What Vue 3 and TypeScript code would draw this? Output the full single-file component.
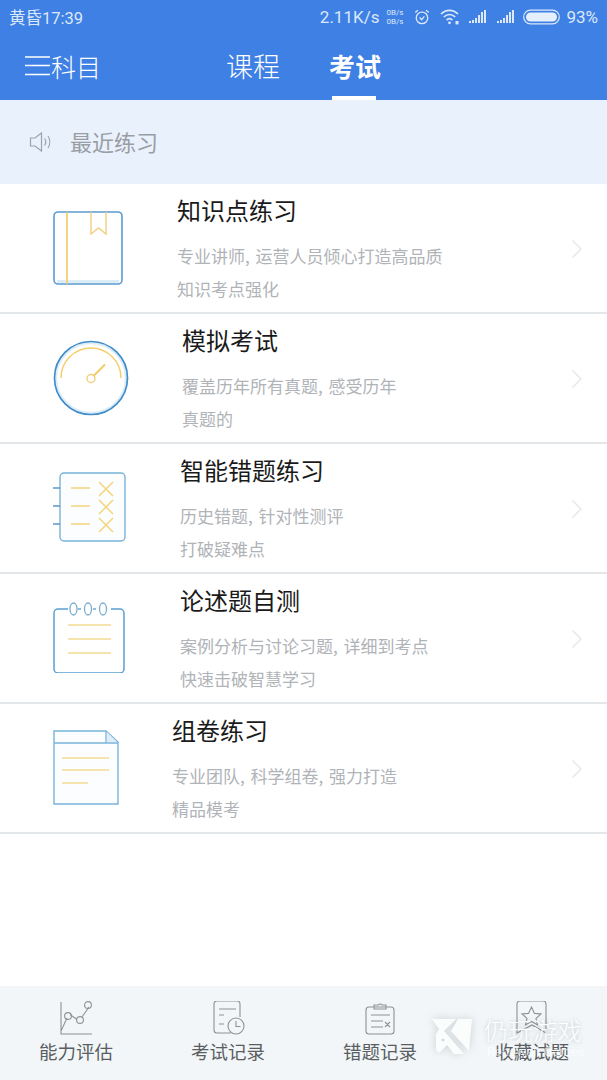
<script setup lang="ts">
import { ref } from 'vue'

interface Row {
  key: string
  title: string
  lines: string[]
}

const rows: Row[] = [
  { key: 'book', title: '知识点练习', lines: ['专业讲师, 运营人员倾心打造高品质', '知识考点强化'] },
  { key: 'gauge', title: '模拟考试', lines: ['覆盖历年所有真题, 感受历年', '真题的'] },
  { key: 'wrong', title: '智能错题练习', lines: ['历史错题, 针对性测评', '打破疑难点'] },
  { key: 'note', title: '论述题自测', lines: ['案例分析与讨论习题, 详细到考点', '快速击破智慧学习'] },
  { key: 'paper', title: '组卷练习', lines: ['专业团队, 科学组卷, 强力打造', '精品模考'] },
]

const tabs = ['能力评估', '考试记录', '错题记录', '收藏试题']
const active = ref('考试')
</script>

<template>
  <div class="page">
    <header class="top">
      <div class="status">
        <span class="clock">黄昏17:39</span>
        <div class="status_right">
          <span class="speed">2.11K/s</span>
          <span class="net"><i>0B/s</i><i>0B/s</i></span>
          <svg class="alarm" width="18" height="20" viewBox="0 0 20 20" fill="none" stroke="#dce8fa" stroke-width="1.5">
            <circle cx="10" cy="11" r="6.4" />
            <path d="M7.4 10.5l2.2 2.4 3-3.6M2.5 5l3-2.4M17.5 5l-3-2.4" />
          </svg>
          <svg class="wifi" width="20" height="18" viewBox="0 0 20 18" fill="none" stroke="#dce8fa" stroke-width="1.7">
            <path d="M1 6c5-4.8 12-4.8 17 0M3.8 9c3.4-3.2 8-3.2 11.4 0M6.600 12c1.800-1.600 4-1.600 5.800 0" />
            <circle cx="9.500" cy="14.800" r="1.400" fill="#dce8fa" stroke="none" />
            <rect x="15.500" y="13" width="3" height="3.400" fill="#dce8fa" stroke="none" />
          </svg>
          <svg class="bars" width="20" height="14" viewBox="0 0 18 14" fill="#dce8fa">
            <rect x="0" y="11" width="2" height="2" /><rect x="3" y="10" width="2" height="3" />
            <rect x="6" y="8" width="2" height="5" /><rect x="9" y="5" width="2" height="8" />
            <rect x="12" y="2" width="2" height="11" /><rect x="15" y="0" width="2" height="13" />
          </svg>
          <svg class="bars" width="20" height="14" viewBox="0 0 18 14" fill="#dce8fa">
            <rect x="0" y="11" width="2" height="2" /><rect x="3" y="10" width="2" height="3" />
            <rect x="6" y="8" width="2" height="5" /><rect x="9" y="5" width="2" height="8" />
            <rect x="12" y="2" width="2" height="11" /><rect x="15" y="0" width="2" height="13" />
          </svg>
          <svg class="battery" width="37" height="16" viewBox="0 0 37 16">
            <rect x="0.700" y="1.200" width="35.600" height="13.600" rx="6.800" fill="none" stroke="#dce8fa" stroke-width="1.200" />
            <rect x="3" y="3.400" width="31" height="9.200" rx="4.600" fill="#e6effc" />
          </svg>
          <span class="pct">93%</span>
        </div>
      </div>
      <nav class="nav">
        <div class="subject">
          <svg width="25" height="21" viewBox="0 0 25 21" stroke="#fff" stroke-width="1.400">
            <path d="M0 2h25M0 10.500h25M0 19.500h25" />
          </svg>
          <span>科目</span>
        </div>
        <div class="nav_tabs">
          <span class="nav_tab">课程</span>
          <span class="nav_tab on">{{ active }}</span>
        </div>
      </nav>
    </header>

    <div class="recent">
      <svg width="24" height="24" viewBox="0 0 24 24" fill="none" stroke="#9aa3ad" stroke-width="1.200">
        <path d="M1.500 8h4.500l6.500-5v18l-6.500-5H1.500zM15.500 8.500c1.500 2 1.500 5 0 7M19 6c2.300 3.500 2.300 8.500 0 12" />
      </svg>
      <span>最近练习</span>
    </div>

    <ul class="list">
      <li v-for="row in rows" :key="row.key" class="row" :class="'row_' + row.key">
        <div class="icon">
          <svg v-if="row.key === 'book'" width="72" height="78" viewBox="0 0 72 78" fill="none">
            <rect x="1" y="5" width="68" height="72" rx="4" fill="#fff" stroke="#5b9bd0" stroke-width="1.600" />
            <path d="M4 74.500h62" stroke="#dcedf8" stroke-width="3" />
            <path d="M14 5v72" stroke="#f4ca63" stroke-width="1.600" />
            <path d="M38 5v22l7.500-6 7.500 6V5" stroke="#f0d080" stroke-width="1.400" />
          </svg>
          <svg v-else-if="row.key === 'gauge'" width="78" height="78" viewBox="0 0 78 78" fill="none">
            <circle cx="38" cy="38" r="34.800" fill="#fff" stroke="#dcedf8" stroke-width="2" />
            <circle cx="38" cy="38" r="36.500" stroke="#3f8ccb" stroke-width="1.700" />
            <path d="M8 38a30 30 0 0 1 60 0" stroke="#f4cf6c" stroke-width="1.500" />
            <circle cx="38" cy="38.500" r="4" fill="#fff" stroke="#f0cf72" stroke-width="1.300" />
            <path d="M41 35.500l11-11" stroke="#f0c95f" stroke-width="1.800" />
          </svg>
          <svg v-else-if="row.key === 'wrong'" width="74" height="72" viewBox="0 0 74 72" fill="none">
            <rect x="7" y="1" width="65" height="68" rx="4" fill="#fbfdff" stroke="#78b2d8" stroke-width="1.400" />
            <path d="M0 16h7M0 34h7M0 52h7" stroke="#5e97c4" stroke-width="1.400" />
            <path d="M18 16h19M18 34h19M18 52h19" stroke="#f4d480" stroke-width="1.500" />
            <path d="M46 10l14 14M60 10L46 24M46 28l14 14M60 28L46 42M46 46l14 14M60 46L46 60" stroke="#f3d67c" stroke-width="1.500" />
          </svg>
          <svg v-else-if="row.key === 'note'" width="74" height="72" viewBox="0 0 74 72" fill="none">
            <path d="M16 8H6a4 4 0 0 0-4 4v56a4 4 0 0 0 4 4h62a4 4 0 0 0 4-4V12a4 4 0 0 0-4-4H59" stroke="#5a9ed1" stroke-width="1.500" />
            <path d="M26 8h3M41 8h3" stroke="#6fa8cf" stroke-width="1.300" />
            <ellipse cx="21.500" cy="8" rx="3.500" ry="6" stroke="#78acd0" stroke-width="1.300" />
            <ellipse cx="36" cy="8" rx="3.500" ry="6" stroke="#78acd0" stroke-width="1.300" />
            <ellipse cx="51" cy="8" rx="3.500" ry="6" stroke="#78acd0" stroke-width="1.300" />
            <path d="M16 24h43M16 38h43M16 52h43" stroke="#f4dc92" stroke-width="1.500" />
          </svg>
          <svg v-else width="66" height="76" viewBox="0 0 66 76" fill="none">
            <path d="M1 1h52l12 11v62H1z" fill="#fbfdff" stroke="#78b4da" stroke-width="1.400" />
            <path d="M1 13h64M53 1v12" stroke="#78b4da" stroke-width="1.300" />
            <path d="M54 2l10 10H54z" fill="#dfeef7" />
            <path d="M9 28h47M9 40h47M9 53h26" stroke="#f4dc92" stroke-width="1.500" />
          </svg>
        </div>
        <div class="text">
          <h3>{{ row.title }}</h3>
          <p v-for="line in row.lines" :key="line">{{ line }}</p>
        </div>
        <svg class="arrow" width="12" height="20" viewBox="0 0 12 20" fill="none" stroke="#e6e8ec" stroke-width="1.500">
          <path d="M1.500 1.500L10 10l-8.500 8.500" />
        </svg>
      </li>
    </ul>

    <footer class="bottom">
      <div v-for="(tab, i) in tabs" :key="tab" class="tab">
        <svg width="34" height="34" viewBox="0 0 34 34" fill="none" stroke="#8e9295" stroke-width="1.100">
          <template v-if="i === 0">
            <path d="M2 1v32h31M2 30l6-13M11 13.500l7 5M23 16l7-10" />
            <circle cx="9" cy="15" r="3.400" />
            <circle cx="21" cy="19" r="3.400" />
            <circle cx="29" cy="4" r="3.400" />
          </template>
          <template v-else-if="i === 1">
            <path d="M20 32H6a3 3 0 0 1-3-3V3a3 3 0 0 1 3-3h20a3 3 0 0 1 3 3v13" />
            <path d="M8 8h17M8 14h5M8 23h5" />
            <circle cx="25" cy="25" r="8" fill="#f2f6f8" />
            <path d="M25 20v5.500h4.500" />
          </template>
          <template v-else-if="i === 2">
            <rect x="3" y="6" width="28" height="27" rx="3" />
            <path d="M11 6V4h4.500a2 2 0 0 1 3.500 0H23v4H11zM8 14h19M8 20h12M8 26h12M22 21l5 5M27 21l-5 5" />
          </template>
          <template v-else>
            <path d="M2 3a3 3 0 0 1 3-3h23a3 3 0 0 1 3 3v29l-14-8-15 8z" />
            <path d="M16.500 6l3 6.400 6.500.6-5 4.400 1.500 6.600-6-3.500-6 3.500 1.500-6.600-5-4.400 6.500-.6z" />
          </template>
        </svg>
        <span>{{ tab }}</span>
      </div>
    </footer>

    <div class="mark">
      <svg class="mark_logo" width="44" height="38" viewBox="4 6 44 38" fill="#fbfcfc">
        <path fill-rule="evenodd" d="M4 7H28L16 19 36 42H26L19 33 12 40Q8 41 8 36V22L11 17zM15 26.500a1.500 1.500 0 1 0 .1 0z" />
        <path d="M30 7H44L41 39 23 19z" />
      </svg>
      <div class="mark_text">
        <b>仍玩游戏</b>
        <i>Rengwan Games</i>
      </div>
    </div>
  </div>
</template>

<style>
html, body {
  margin: 0;
  background: #fff;
}
</style>

<style scoped>
.page {
  position: relative;
  display: flex;
  flex-direction: column;
  width: 607px;
  height: 1080px;
  overflow: hidden;
  background: #fff;
  font-family: "Noto Sans CJK SC", "Noto Sans", sans-serif;
}

.top {
  height: 100px;
  background: #3f80e4;
  color: #fff;
}

.status {
  display: flex;
  align-items: center;
  justify-content: space-between;
  height: 33px;
  padding: 0 9px 0 9px;
  color: #dce8fa;
}

.clock {
  font-family: Roboto, "Noto Sans CJK SC", sans-serif;
  font-size: 16.500px;
}

.status_right {
  display: flex;
  align-items: center;
  font-family: Roboto, sans-serif;
}

.speed {
  font-size: 17px;
}

.net {
  display: flex;
  flex-direction: column;
  width: 18px;
  margin-left: 7px;
  font-size: 8px;
  line-height: 9px;
}

.net i {
  font-style: normal;
}

.alarm {
  margin-left: 9px;
}

.wifi {
  margin-left: 9px;
}

.bars {
  margin-left: 8px;
  margin-top: 1px;
}

.battery {
  margin-left: 7px;
}

.pct {
  margin-left: 6px;
  font-size: 17px;
}

.nav {
  display: flex;
  align-items: center;
  height: 67px;
  padding-left: 25px;
}

.subject {
  display: flex;
  align-items: center;
  gap: 1px;
  width: 201px;
  margin-top: -2px;
  font-size: 25px;
  font-weight: 300;
}

.nav_tabs {
  display: flex;
  gap: 49px;
  height: 67px;
}

.nav_tab {
  position: relative;
  font-size: 27px;
  line-height: 65px;
  font-weight: 300;
}

.nav_tab.on {
  font-size: 26px;
  font-weight: 700;
}

.nav_tab.on::after {
  content: "";
  position: absolute;
  left: 3px;
  right: 5px;
  bottom: 0;
  height: 4px;
  background: #fff;
}

.recent {
  display: flex;
  align-items: center;
  gap: 17px;
  height: 84px;
  padding-left: 29px;
  box-sizing: border-box;
  background: #e9f1fc;
  color: #999ea4;
  font-size: 22px;
}

.recent span {
  margin-bottom: 3px;
}

.list {
  margin: 0;
  padding: 0;
  list-style: none;
}

.row {
  position: relative;
  display: flex;
  height: 130px;
  box-sizing: border-box;
  border-bottom: 2px solid #e4e7ea;
}

.icon {
  flex: none;
  display: flex;
  align-items: center;
  box-sizing: border-box;
  padding-left: 53px;
}

.row_book .icon { width: 177px; padding-bottom: 4px; }
.row_gauge .icon { width: 182px; padding-top: 2px; }
.row_wrong .icon { width: 180px; }
.row_note .icon { width: 180px; padding-left: 52px; padding-bottom: 2px; }
.row_paper .icon { width: 172px; }

.text h3 {
  margin: 9px 0 12px;
  color: #1a1a1a;
  font-size: 24px;
  font-weight: 400;
  line-height: 34px;
}

.text p {
  margin: 0;
  color: #b0b3b7;
  font-size: 17px;
  line-height: 33px;
  word-spacing: 2px;
}

.arrow {
  position: absolute;
  right: 24px;
  top: 55px;
}

.bottom {
  position: absolute;
  left: 0;
  right: 0;
  bottom: 0;
  display: grid;
  grid-template-columns: repeat(4, 152px);
  height: 94px;
  box-sizing: border-box;
  padding-top: 15px;
  background: #f2f6f8;
}

.tab {
  display: flex;
  flex-direction: column;
  align-items: center;
  gap: 4px;
  color: #5a5e62;
  font-size: 18.500px;
  line-height: 24px;
}

.mark {
  position: absolute;
  left: 432px;
  top: 1016px;
  display: flex;
  gap: 8px;
  color: #fff;
}

.mark_logo {
  margin-top: 2px;
  filter: drop-shadow(0 0 4px rgba(90, 100, 110, 0.25));
}

.mark_text {
  display: flex;
  flex-direction: column;
}

.mark_text b {
  font-size: 24px;
  font-weight: 300;
  letter-spacing: 0.5px;
  line-height: 28px;
  text-shadow: 0 0 4px rgba(90, 100, 110, 0.35);
}

.mark_text i {
  margin-left: 3px;
  font-size: 13px;
  font-style: normal;
  font-family: Roboto, sans-serif;
  opacity: 0.6;
}
</style>
